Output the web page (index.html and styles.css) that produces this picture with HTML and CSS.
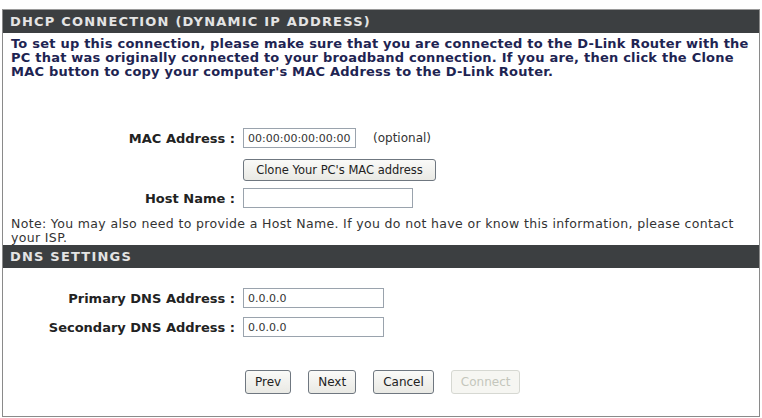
FILE: index.html
```html
<!DOCTYPE html>
<html lang="en">
<head>
  <meta charset="UTF-8">
  <title>Internet Connection Setup</title>
  <link rel="stylesheet" href="styles.css">
</head>
<body>

  <div class="frame">
    <div class="section">
      <h2 class="head">DHCP CONNECTION (DYNAMIC IP ADDRESS)</h2>
      <div class="body">
        <p class="intro">To set up this connection, please make sure that you are connected to the D-Link Router with the<br>
          PC that was originally connected to your broadband connection. If you are, then click the Clone<br>
          MAC button to copy your computer's MAC Address to the D-Link Router.</p>
        <div class="form">
          <label for="mac">MAC Address :</label>
          <div class="field">
            <input type="text" id="mac" class="mac" value="00:00:00:00:00:00">
            <span class="hint">(optional)</span>
          </div>
          <span></span>
          <div class="field clonerow">
            <button type="button" class="btn clone">Clone Your PC's MAC address</button>
          </div>
          <label for="host">Host Name :</label>
          <div class="field">
            <input type="text" id="host" class="host">
          </div>
        </div>
        <p class="note">Note: You may also need to provide a Host Name. If you do not have or know this information, please contact<br>
          your ISP.</p>
      </div>
    </div>

    <div class="section">
      <h2 class="head">DNS SETTINGS</h2>
      <div class="body dns">
        <div class="form">
          <label for="dns1">Primary DNS Address :</label>
          <div class="field">
            <input type="text" id="dns1" class="dnsin" value="0.0.0.0">
          </div>
          <label for="dns2">Secondary DNS Address :</label>
          <div class="field">
            <input type="text" id="dns2" class="dnsin" value="0.0.0.0">
          </div>
        </div>
        <div class="actions">
          <button type="button" class="btn">Prev</button>
          <button type="button" class="btn">Next</button>
          <button type="button" class="btn">Cancel</button>
          <button type="button" class="btn" disabled>Connect</button>
        </div>
      </div>
    </div>
  </div>

</body>
</html>
```

FILE: styles.css
```css
body {
  margin: 0;
  background-color: #fff;
  font-family: "DejaVu Sans", Verdana, sans-serif;
}
.frame {
  margin: 9px 0 0 2px;
  width: 756px;
  height: 406px;
  border: 1px solid #8a8a8a;
  border-top-color: #9a9a9a;
}
.head {
  margin: 0;
  height: 23px;
  line-height: 23px;
  padding-left: 7px;
  background-color: #3c3f41;
  color: #e4e4e4;
  font-size: 13px;
  font-weight: bold;
  letter-spacing: 1.2px;
  white-space: nowrap;
}
.body {
  padding: 0 4px 0 8px;
}
.intro {
  margin: 4px 0 0;
  font-size: 13px;
  font-weight: bold;
  line-height: 14px;
  letter-spacing: 0.22px;
  color: #1e2452;
  white-space: nowrap;
}
.form {
  display: grid;
  grid-template-columns: 224px auto;
  column-gap: 8px;
  row-gap: 7px;
  align-items: center;
  margin-top: 49px;
}
.form label {
  text-align: right;
  font-size: 13px;
  font-weight: bold;
  color: #222;
  white-space: nowrap;
}
.field {
  display: flex;
  align-items: center;
  gap: 17px;
}
.clonerow {
  padding-top: 4px;
}
input[type="text"] {
  box-sizing: border-box;
  height: 20px;
  margin: 0;
  padding: 0 4px;
  border: 1px solid #9aa3ad;
  font-family: "DejaVu Sans", Verdana, sans-serif;
  font-size: 11px;
  color: #333;
}
.mac {
  width: 113px;
}
.host {
  width: 170px;
}
.dnsin {
  width: 141px;
}
.hint {
  font-size: 12px;
  color: #333;
}
.btn {
  box-sizing: border-box;
  height: 24px;
  padding: 0 9px;
  border: 1px solid #6f7780;
  border-radius: 3px;
  background: linear-gradient(#fafaf8, #e9e9e4);
  font-family: "DejaVu Sans", Verdana, sans-serif;
  font-size: 12px;
  color: #222;
}
.btn:disabled {
  border-color: #d6d8d2;
  background: #f6f6f2;
  color: #c4c6bc;
}
.clone {
  width: 193px;
  height: 22px;
  font-size: 11.5px;
}
.note {
  margin: 9px 0 0;
  font-size: 12.5px;
  line-height: 14px;
  letter-spacing: 0.35px;
  color: #333;
  white-space: nowrap;
}
.dns .form {
  margin-top: 20px;
  row-gap: 9px;
}
.actions {
  display: flex;
  gap: 17px;
  margin-top: 33px;
  padding-left: 234px;
}
```
